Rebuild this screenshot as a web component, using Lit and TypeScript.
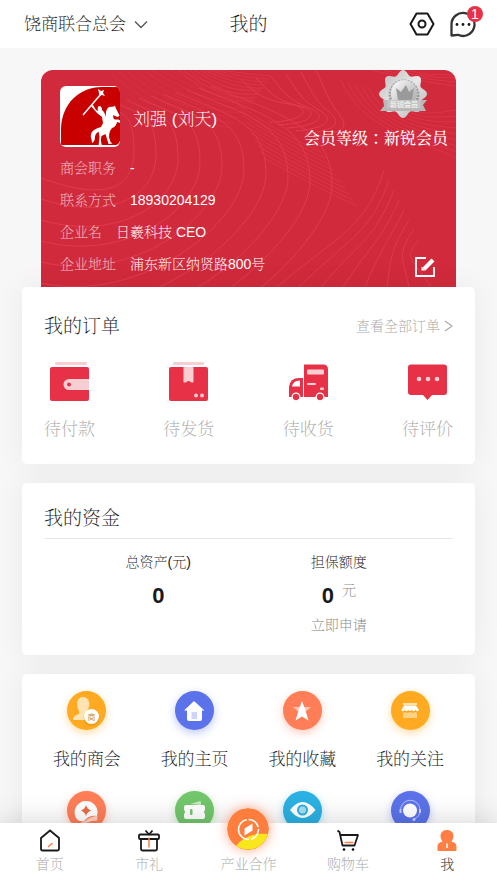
import { LitElement, html, svg, css } from "lit";
import { customElement } from "lit/decorators.js";

const wallet = svg`
  <rect x="5" width="32" height="3" rx="1" fill="#f7cfd2"/>
  <rect y="5" width="39" height="34" rx="2" fill="#e73147"/>
  <path d="M39 17H19a5.500 5.500 0 0 0 0 11H39z" fill="#f7cfd2"/><circle cx="19" cy="22.500" r="2" fill="#e73147"/>`;
const parcel = svg`
  <rect x="4" width="31" height="3" rx="1" fill="#f7cfd2"/>
  <rect y="5" width="39" height="34" rx="2" fill="#e73147"/>
  <path d="M14.500 5h10v15q-1 1-3 0-2-2-4 0-2 1-3 0z" fill="#f7cfd2"/>
  <circle cx="27" cy="33.500" r="1.900" fill="#f7cfd2"/><circle cx="33" cy="33.500" r="1.900" fill="#f7cfd2"/>`;
const truck = svg`
  <path d="M15 2.500H34q5 0 5 5V35H15z" fill="#e73147"/>
  <path d="M14 16v19H0V25q1-9 10-9z" fill="#e73147"/>
  <path d="M3 24.500q1-6 8-6v6z" fill="#fff"/>
  <rect x="18" y="7.500" width="17" height="5" rx="1" fill="#f7cfd2"/>
  <rect x="18" y="21" width="9" height="2" rx="1" fill="#f7cfd2"/><rect x="31" y="25.500" width="4" height="2.400" rx="1" fill="#f7cfd2"/>
  <g fill="#e73147" stroke="#fff" stroke-width="1.300"><circle cx="7" cy="35" r="3.800"/><circle cx="31" cy="35" r="3.800"/></g>`;
const comment = svg`
  <path d="M3 2.500H36q3 0 3 3V30q0 3-3 3H24l-4.500 5L15 33H3q-3 0-3-3V5.500q0-3 3-3z" fill="#e73147"/>
  <g fill="#f7cfd2"><circle cx="11" cy="17" r="2.300"/><circle cx="20" cy="17" r="2.300"/><circle cx="29" cy="17" r="2.300"/></g>`;

const chamber = svg`
  <path d="M6 28q1-4 6-5 1-2-1-5c-2-5-1-12 5-12s8 7 5 12q-2 3-1 5l4 2v4H7q-1 0-1-1z" fill="#ffe3b3"/>
  <circle cx="24.500" cy="27" r="8" fill="#c98000" opacity=".3"/><circle cx="24.500" cy="25.500" r="7.500" fill="#fff"/>
  <text x="24.500" y="28.500" text-anchor="middle" font-size="8" font-weight="400" font-family="Noto Sans CJK SC, sans-serif" fill="#c98c35">商</text>`;
const house = svg`
  <path d="M19 10l10.500 9.500H27V28q0 2-2 2H14q-2 0-2-2v-8.500H9z" fill="#fff"/>
  <path d="M16.500 21h5.500v7h-5.500z" fill="#cdd5ff"/>`;
const star = svg`
  <path d="M10 16h18l-7 6h-4z" fill="#ffc5b2"/>
  <path d="M19 10l3 8 3.500 11.500-6.500-4-6.500 4L16 18z" fill="#fff"/>`;
const shop = svg`
  <rect x="12" y="12" width="14" height="2" fill="#ffe3b3"/>
  <path d="M13 14.500h12l3 4.500q-1 2.500-3.500 0-2 2-4 0-1.500 2-3 0-2 2-3.500 0-2.500 2.500-3.500 0z" fill="#fff"/>
  <path d="M12 22l2-1 2 1 3-1 3 1 2-1 2 1v5H12z" fill="#ffd183"/>`;
const coin = svg`
  <path d="M9 27a11.500 11.500 0 1 1 21-2q-8-1-13 5-5 1-8-3z" fill="#fff"/>
  <path d="M19 14q1 4 5 5.500-4 1.500-5 5.500-1-4-5-5.500 4-1.500 5-5.500z" fill="#ee6a45"/>
  <path d="M13 31c6 1 8-6 18-6-2 2 1 3-2 5-6-1-8 4-16 1z" fill="#ffd0c2"/>`;
const ticket = svg`
  <path d="M15 13l10-3q1 0 1 2v2z" fill="#c4eabe"/>
  <path d="M11 14h17q2 0 2 2v3q-2 2 0 4v3q0 2-2 2H11q-2 0-2-2v-3q2-2 0-4v-3q0-2 2-2z" fill="#fff"/>
  <rect x="15" y="18" width="2.500" height="6" rx="1" fill="#72c66b"/>`;
const eye = svg`
  <path d="M7 19q12.500-16 25.500 0Q19.500 35 7 19z" fill="#fff"/><circle cx="19.500" cy="19" r="5.500" fill="#2bb1e3"/>
  <circle cx="19.500" cy="19" r="3.500" fill="#a9def3"/>`;
const service = svg`
  <path d="M9.500 19a9.500 9.500 0 0 1 19.500 0q0 7-6 9" fill="none" stroke="#b8c2ff"/>
  <circle cx="19" cy="19.500" r="7" fill="#fff"/>
  <path d="M9.500 18v4M29 18v4" stroke="#c7cfff" stroke-width="2"/><circle cx="23" cy="28.500" r="1.500" fill="#c7cfff"/>`;

const orders = [
  { label: "待付款", icon: wallet }, { label: "待发货", icon: parcel },
  { label: "待收货", icon: truck }, { label: "待评价", icon: comment },
];
const services = [
  { label: "我的商会", icon: chamber, tone: "amber" }, { label: "我的主页", icon: house, tone: "blue" },
  { label: "我的收藏", icon: star, tone: "coral" }, { label: "我的关注", icon: shop, tone: "amber" },
  { label: "", icon: coin, tone: "coral" }, { label: "", icon: ticket, tone: "green" },
  { label: "", icon: eye, tone: "cyan" }, { label: "", icon: service, tone: "blue" },
];
const details = [
  ["商会职务", "-"], ["联系方式", "18930204129"], ["企业名", "日羲科技 CEO"], ["企业地址", "浦东新区纳贤路800号"],
];
const tabs = [
  { label: "首页", icon: svg`<path d="M3 9L12 1.500 21 9v11q0 1.500-1.500 1.500h-15Q3 21.500 3 20z" fill="none" stroke="#1a1a1a" stroke-width="1.800"/><path d="M10 18l4.500-4" stroke="#ff7e44" stroke-width="1.500"/>` },
  { label: "市礼", icon: svg`<g fill="none" stroke="#1a1a1a" stroke-width="1.800"><rect x="2" y="5.500" width="20" height="4.500" rx="1"/><path d="M4 10v10q0 1.500 1.500 1.500h13q1.500 0 1.500-1.500V10M8.500 1.500L12 5.500l3.500-4"/></g><path d="M12 8.500v10" stroke="#ff7e44" stroke-width="1.500"/>` },
  { label: "产业合作", icon: null },
  { label: "购物车", icon: svg`<path d="M1.500 1.500l2 1.500 3 13.500h12L22 6H4.500" fill="none" stroke="#1a1a1a" stroke-width="1.800" stroke-linejoin="round"/><path d="M8.500 13.500h9" stroke="#ff7e44" stroke-width="1.500"/><circle cx="8" cy="20.500" r="1.300"/><circle cx="17" cy="20.500" r="1.300"/>` },
  { label: "我", icon: svg`<path d="M12 1c7 0 8 7 4.500 11.500 3 1 5 2 5 5.500v3q0 1-1 1h-17q-1 0-1-1v-3c0-3.500 2-4.500 5-5.500C4 8 5 1 12 1z" fill="#ff7e44"/><path d="M12 14.500v4.500" stroke="#fff" stroke-width="1.500"/>` },
];

/* Wavy outline of the medal: eight soft points round a centre. */
function burst(): string {
  const pts: string[] = [];
  for (let i = 0; i <= 120; i++) {
    const a = (i / 120) * Math.PI * 2;
    const r = 21.5 + 2.5 * Math.cos(a * 8);
    pts.push(`${(25 + r * Math.sin(a)).toFixed(2)},${(24 - r * Math.cos(a)).toFixed(2)}`);
  }
  return pts.join(" ");
}

@customElement("app-root")
export class AppRoot extends LitElement {
  static styles = css`
    :host { display: block; min-height: 100vh; background: #f7f7f7; color: #1a1a1a; font: 200 14px/20px "Liberation Sans", "Noto Serif CJK TC", "Noto Serif CJK SC", "Noto Sans CJK SC", sans-serif; }
    * { box-sizing: border-box; }
    button { font: inherit; color: inherit; background: none; border: 0; padding: 0; cursor: pointer; }
    a { color: inherit; text-decoration: none; }
    h1, h2, p, dl, dd, dt { margin: 0; font-weight: 200; }
    svg { display: block; }
    .page { height: 100vh; overflow: hidden; display: flex; flex-direction: column; }
    .content { flex: 1; min-height: 0; overflow: hidden; }
    .top { flex: none; display: grid; grid-template-columns: 1fr auto 1fr; align-items: center; height: 48px; padding: 0 14px; background: #fff; }
    .org { display: flex; align-items: center; gap: 8px; margin-left: 10px; padding-top: 2px; font-size: 17px; line-height: 24px; white-space: nowrap; }
    .top h1 { padding-top: 2px; font-size: 19px; line-height: 28px; }
    .tools { display: flex; justify-content: flex-end; align-items: center; gap: 14px; }
    .messages { position: relative; }
    .badge { position: absolute; right: 0; top: -4px; width: 16px; height: 16px; border-radius: 8px; background: #e73147; color: #fff; font-size: 14px; line-height: 16px; text-align: center; }
    .member { position: relative; margin: 22px 41px 0; height: 217px; padding: 16px 8px 0 19px; border-radius: 12px 12px 0 0; background: #d02a3c; color: #fff; overflow: hidden; }
    .waves { position: absolute; inset: 0; width: 100%; height: 100%; }
    .who { position: relative; display: flex; align-items: center; gap: 13px; height: 61px; font-size: 17px; line-height: 24px; }
    .who span { padding-top: 6px; }
    .avatar { border-radius: 6px; }
    .level { position: absolute; top: 0; right: 8px; display: flex; flex-direction: column; align-items: flex-end; gap: 10px; font-size: 16px; font-weight: 500; }
    .level svg { margin-right: 20px; }
    .details { position: relative; display: grid; gap: 12px; margin-top: 11px; }
    .row { display: flex; gap: 14px; }
    .row dt { opacity: .7; }
    .edit { position: absolute; right: 20px; bottom: 10px; }
    .card { margin: 0 22px 19px; padding: 24px 22px 22px; border-radius: 5px; background: #fff; box-shadow: 0 0 30px rgba(0, 0, 0, .06); position: relative; }
    .card h2 { padding-top: 2px; font-size: 19px; line-height: 28px; }
    .head { display: flex; justify-content: space-between; align-items: center; }
    .all { display: flex; align-items: center; gap: 4px; color: #aaa; }
    .orders { display: flex; justify-content: space-between; margin-top: 21px; color: #aaa; font-size: 17px; line-height: 24px; }
    .orders button { display: flex; flex-direction: column; align-items: center; gap: 17px; }
    .funds { padding: 20px 22px; }
    .columns { display: grid; grid-template-columns: 1fr 1fr; margin-top: 5px; padding: 13px 24px 0; border-top: 1px solid #e8e8e8; text-align: center; }
    .amount { display: flex; justify-content: center; gap: 8px; margin: 8px 0 6px; color: #888; }
    .amount strong { padding-top: 3px; font-size: 22px; line-height: 26px; font-weight: 700; color: #1a1a1a; }
    .apply { color: #888; }
    .services { display: grid; grid-template-columns: repeat(4, 1fr); row-gap: 19px; padding: 17px 11px; margin-bottom: 0; font-size: 17px; line-height: 24px; }
    .services a { display: flex; flex-direction: column; align-items: center; gap: 18px; white-space: nowrap; }
    .disc { width: 39px; height: 39px; border-radius: 50%; }
    .amber { background: #ffaa20; box-shadow: 0 3px 8px rgba(255, 170, 32, .4); }
    .blue { background: #5b72ea; box-shadow: 0 3px 8px rgba(91, 114, 234, .4); }
    .coral { background: #ff7e57; box-shadow: 0 3px 8px rgba(255, 126, 87, .4); }
    .green { background: #72c66b; box-shadow: 0 3px 8px rgba(114, 198, 107, .4); }
    .cyan { background: #2bb1e3; box-shadow: 0 3px 8px rgba(43, 177, 227, .4); }
    .tabs { position: relative; flex: none; display: grid; grid-template-columns: repeat(5, 1fr); height: 60px; background: #fff; box-shadow: 0 0 30px rgba(0, 0, 0, .18); color: #aaa; }
    .tabs a { position: relative; display: flex; flex-direction: column; align-items: center; justify-content: flex-end; gap: 2px; padding-bottom: 9px; }
    .tabs .active { color: #1a1a1a; }
    .fab { position: absolute; top: -15px; border-radius: 50%; box-shadow: 0 0 12px rgba(255, 110, 60, .6); }
  `;

  render() {
    return html`<div class="page">
      <header class="top">
        <button class="org">饶商联合总会
          <svg width="14" height="10" viewBox="0 0 14 10"><path d="M1 1.500l6 6 6-6" fill="none" stroke="#555" stroke-width="1.300"/></svg>
        </button>
        <h1>我的</h1>
        <div class="tools">
          <button aria-label="设置"><svg width="26" height="24" viewBox="0 0 26 24" fill="none" stroke="#1a1a1a" stroke-width="2"><path d="M7.500 1.500h11L24.500 12l-6 10.500h-11L1.500 12z" stroke-linejoin="round"/><circle cx="13" cy="12" r="3.500"/></svg></button>
          <button class="messages" aria-label="消息"><svg width="34" height="28" viewBox="0 0 34 28"><path d="M2.500 25.500V14A11.500 11.500 0 1 1 9 24.800z" fill="none" stroke="#333" stroke-width="2.300" stroke-linejoin="round"/><g fill="#1a1a1a"><circle cx="8" cy="14.500" r="1.400"/><circle cx="14" cy="14.500" r="1.400"/><circle cx="20" cy="14.500" r="1.400"/></g></svg><span class="badge">1</span></button>
        </div>
      </header>
      <main class="content">
        <section class="member">
          ${this.waves()}
          <div class="who">${this.avatar()}<span>刘强 (刘天)</span></div>
          <div class="level">${this.medal()}<span>会员等级：新锐会员</span></div>
          <dl class="details">${details.map(([k, v]) => html`<div class="row"><dt>${k}</dt><dd>${v}</dd></div>`)}</dl>
          <button class="edit" aria-label="编辑"><svg width="21" height="20" viewBox="0 0 21 20"><path d="M11 1H1v18h18V10" fill="none" stroke="#fff" stroke-width="1.800"/><path d="M9 12L18 3" stroke="#fff" stroke-width="4"/><path d="M6.500 9.500l4 4h-4z" fill="#fff"/></svg></button>
        </section>
        <section class="card">
          <div class="head"><h2>我的订单</h2><a class="all" href="#orders">查看全部订单<svg width="9" height="12" viewBox="0 0 9 12"><path d="M1 1l7 5-7 5" fill="none" stroke="#aaa" stroke-width="1.300"/></svg></a></div>
          <div class="orders">${orders.map((o) => html`<button><svg width="39" height="39" viewBox="0 0 39 39">${o.icon}</svg><span>${o.label}</span></button>`)}</div>
        </section>
        <section class="card funds">
          <h2>我的资金</h2>
          <div class="columns">
            <div><p>总资产(元)</p><p class="amount"><strong>0</strong></p></div>
            <div><p>担保额度</p><p class="amount"><strong>0</strong><span>元</span></p><a class="apply" href="#apply">立即申请</a></div>
          </div>
        </section>
        <nav class="card services">${services.map((s) => html`<a href="#service"><svg class="disc ${s.tone}" viewBox="0 0 39 39">${s.icon}</svg>${s.label ? html`<span>${s.label}</span>` : null}</a>`)}</nav>
      </main>
      <nav class="tabs">${tabs.map((t, i) => html`<a href="#tab" class=${i === 4 ? "active" : ""}>${t.icon ? html`<svg width="24" height="23" viewBox="0 0 24 23">${t.icon}</svg>` : this.fab()}<span>${t.label}</span></a>`)}</nav>
    </div>`;
  }

  private waves() {
    const range = (n: number) => Array.from({ length: n }, (_, i) => i);
    return html`<svg class="waves" viewBox="0 0 415 217" preserveAspectRatio="none"><g fill="none" stroke="#e63c50" stroke-width="1">
      ${range(10).map((i) => svg`<path opacity=".9" d="M0 ${108 + i * 21}C${60 + i * 8} ${130 + i * 21} ${93 + i * 22} ${122 + i * 6} ${93 + i * 22} ${80 + i * 4}S${78 + i * 18} 45 ${62 + i * 12} ${34 - i * 2}"/>`)}
      ${range(9).map((i) => svg`<path opacity=".4" d="M${66 + i * 9} 0Q${120 + i * 9} ${50 - i * 3} ${190 + i * 4} ${58 - i * 5}"/>`)}
      ${range(9).map((i) => svg`<path opacity=".6" d="M${138 + i * 5} 0Q${176 + i * 4} ${36 - i * 4} ${214 + i * 2} ${30 - i * 3}"/>`)}
      ${range(6).map((i) => svg`<path d="M${200 + i * 15} ${10 - i * 2}C${216 + i * 14} 24 ${222 + i * 13} 30 ${248 + i * 10} ${34 + i * 2}S${262 + i * 8} ${52 + i * 2} ${228 + i * 9} ${52 + i * 3}"/>`)}
      ${range(10).map((i) => svg`<path opacity=".6" d="M${196 + i * 3} ${34 + i * 6}Q${236 + i * 4} ${62 + i * 6} ${280 + i * 4} ${82 + i * 6}"/>`)}
      ${range(9).map((i) => svg`<path opacity=".6" d="M${300 + i * 7} ${10 + i * 2}C${320 + i * 6} ${60 - i * 2} 380 ${70 - i * 3} 415 ${88 - i * 6}"/>`)}
      ${range(4).map((i) => svg`<path opacity=".6" d="M${330 + i * 12} 0Q${370 + i * 7} ${10 - i} 415 ${16 - i * 4}"/>`)}
      ${range(8).map((i) => svg`<path opacity=".8" d="M${236 + i * 22} 217C${290 + i * 12} ${170 + i * 3} ${325 + i * 5} ${160 + i * 4} ${343 + i * 5} ${100 + i * 10}"/>`)}
    </g></svg>`;
  }

  private avatar() {
    return html`<svg class="avatar" width="60" height="61" viewBox="0 0 60 61"><rect width="60" height="61" fill="#fff"/>
      <path d="M1 59V42C2 18 19 1 42 1h18v54q-1 3-4 4z" fill="#c80000"/>
      <path fill="#fff" d="M31 20l2-1 3 5 2 1q-1-4 1-5 3 0 3 4l2 2 2 5q-1-7 3-10l5-.5 1-1 .5 2 4 8-1.500 1.500-3-1-2-1q0 3 1.500 4.500l4 0 3 2-.5 5-1-.5v-3l-3-1q-1 5-5 6l-2 3q-1 3-1 6l1.500 5 2 1.500-4 .5-3-10-4 2q-1 4 0 8l1 2.500h-4l1-10-1-5q-3 2-3.500 5 0 5-3 6.500 0-3-1-5-1-5 3-8 3-2 7-3l2-4-1-6-5-4z"/>
      <path d="M23 29L41 8" stroke="#fff" stroke-width="1.500"/><path d="M38 3l3 2 3-1-1 3 2 3-3-1-3 1 0-3z" fill="#fff"/></svg>`;
  }

  private medal() {
    return html`<svg width="50" height="49" viewBox="0 0 50 49">
      <defs>
        <linearGradient id="silver" x2="1" y2="1"><stop stop-color="#bbb"/><stop offset=".5" stop-color="#e8e8e8"/><stop offset="1" stop-color="#b0b0b0"/></linearGradient>
        <linearGradient id="ball" x2="1" y2="1"><stop stop-color="#fff"/><stop offset="1" stop-color="#a5a5a5"/></linearGradient>
      </defs>
      <polygon points=${burst()} fill="url(#silver)"/>
      <circle cx="26" cy="25" r="14" fill="none" stroke="#858585" stroke-width="3" stroke-dasharray="2 1" opacity=".7"/><circle cx="26" cy="23" r="13" fill="url(#ball)"/>
      <path d="M20 30l-2-12 5 4 5-7 3 7 5-4-2 12z" fill="#9a9a9a"/>
      <path d="M5 30h44l-4 5 3 6H2l4-5z" fill="#b8b8b8"/><path d="M9 30h34v8H9z" fill="#c4c4c4"/>
      <text x="26" y="37" text-anchor="middle" font-size="7" font-family="Noto Sans CJK SC, sans-serif" fill="#f4f4f4">新锐会员</text></svg>`;
  }

  private fab() {
    return html`<svg class="fab" width="42" height="42" viewBox="0 0 42 42"><circle cx="21" cy="21" r="21" fill="#ff7e3e"/><path d="M9 38Q20 24 41 26A21 21 0 0 1 9 38z" fill="#f8e71c"/><circle cx="21.500" cy="21.500" r="10" fill="none" stroke="#fff" stroke-width="1.500" stroke-dasharray="13 2 30 2"/><path d="M17.500 27.500v-7l8-5v7z" fill="#fff"/></svg>`;
  }
}
